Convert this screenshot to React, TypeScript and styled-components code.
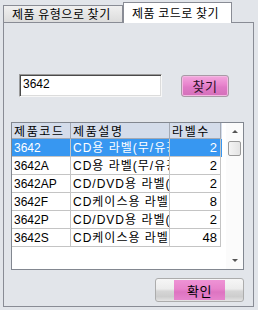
import React from 'react'
import styled, { createGlobalStyle } from 'styled-components'

const GlobalStyle = createGlobalStyle`
    html, body {
        margin: 0;
        background: #e2e5ea;
    }
    body {
        font-family: "Liberation Sans", "Noto Sans CJK KR", sans-serif;
        font-size: 12px;
        color: #000;
    }
`

const Window = styled.div`
    width: 258px;
    height: 310px;
    box-sizing: border-box;
    padding: 2px 4px 3px 3px;
    display: flex;
    flex-direction: column;
`

const TabBar = styled.div`
    display: flex;
    align-items: flex-end;
    height: 21px;
    margin-bottom: -1px;
    position: relative;
    z-index: 1;
`

const Tab = styled.div<{ $active?: boolean }>`
    box-sizing: border-box;
    height: ${(p) => (p.$active ? '21px' : '18px')};
    width: ${(p) => (p.$active ? '109px' : '120px')};
    padding: ${(p) => (p.$active ? '2px 0 0 8px' : '0 0 0 8px')};
    border: 1px solid #898c95;
    border-bottom: ${(p) => (p.$active ? 'none' : '1px solid #898c95')};
    background: ${(p) => (p.$active ? '#fff' : 'linear-gradient(#f0f0f0, #dcdcdc)')};
    font-family: "Noto Sans CJK KR", sans-serif;
    font-size: 12px;
    letter-spacing: 0.5px;
    line-height: 16px;
    white-space: nowrap;
    overflow: hidden;
`

const Panel = styled.div`
    flex: 1;
    border: 1px solid #898c95;
    background: #e2e5ea;
    padding: 51px 9px 0 7px;
    display: flex;
    flex-direction: column;
`

const SearchRow = styled.div`
    display: flex;
    align-items: center;
    gap: 19px;
    margin-left: 8px;
`

const CodeInput = styled.div`
    box-sizing: border-box;
    width: 143px;
    height: 23px;
    border: 1px solid;
    border-color: #9a9a9a #f7f7f7 #f7f7f7 #9a9a9a;
    box-shadow: inset 1px 1px 0 #4a4a4a, inset -1px -1px 0 #dcdcdc;
    background: #fff;
    padding: 2px 3px;
    line-height: 14px;
`

const FindButton = styled.div`
    box-sizing: border-box;
    width: 48px;
    height: 22px;
    border: 1px solid #a89aa6;
    border-radius: 3px;
    background: linear-gradient(#f2a7dd 0%, #e883cd 45%, #e07ac6 55%, #d46fba 100%);
    box-shadow: inset 0 0 0 1px #f3b8e2;
    display: flex;
    align-items: center;
    justify-content: center;
    font-family: "Noto Sans CJK KR", sans-serif;
    font-size: 13px;
    letter-spacing: 0.5px;
    color: #2a1026;
`

const ListBox = styled.div`
    margin-top: 25px;
    height: 148px;
    box-sizing: border-box;
    border: 1px solid #828790;
    background: #fff;
    display: flex;
`

const Grid = styled.div`
    flex: 1;
`

const Row = styled.div<{ $header?: boolean; $selected?: boolean }>`
    display: grid;
    grid-template-columns: 59px 99px 51px;
    height: ${(p) => (p.$header ? '16px' : '18px')};
    box-sizing: border-box;
    background: ${(p) => (p.$header ? '#d4dcea' : p.$selected ? '#3797f1' : '#fff')};
    color: ${(p) => (p.$selected ? '#fff' : '#000')};
`

const Cell = styled.div<{ $header?: boolean; $num?: boolean; $wide?: boolean }>`
    box-sizing: border-box;
    border-right: 1px solid ${(p) => (p.$header ? '#a3a9b4' : '#c4c4c4')};
    border-bottom: 1px solid ${(p) => (p.$header ? '#a3a9b4' : '#c4c4c4')};
    padding: ${(p) => (p.$num ? '0 3px 0 0' : '0 0 0 2px')};
    text-align: ${(p) => (p.$num ? 'right' : 'left')};
    font-family: ${(p) => (p.$header ? '"Noto Sans CJK KR", sans-serif' : 'inherit')};
    font-size: ${(p) => (p.$num ? '13px' : '12px')};
    letter-spacing: ${(p) => (p.$header ? '1.6px' : p.$wide ? '1px' : '0')};
    line-height: ${(p) => (p.$header ? '15px' : '18px')};
    white-space: nowrap;
    overflow: hidden;
`

const ScrollBar = styled.div`
    width: 17px;
    margin-left: 4px;
    display: flex;
    flex-direction: column;
    align-items: center;
    background: #fbfbfb;
`

const Arrow = styled.div<{ $down?: boolean }>`
    height: 17px;
    display: flex;
    align-items: center;
    justify-content: center;
    margin-top: ${(p) => (p.$down ? 'auto' : '0')};
    &::after {
        content: '';
        border-left: 3px solid transparent;
        border-right: 3px solid transparent;
        ${(p) => (p.$down ? 'border-top: 3px solid #555;' : 'border-bottom: 3px solid #555;')}
    }
`

const Thumb = styled.div`
    width: 13px;
    height: 15px;
    margin-top: 1px;
    box-sizing: border-box;
    border: 1px solid #9a9a9a;
    border-radius: 2px;
    background: linear-gradient(90deg, #f4f4f4, #e4e4e4);
`

const Footer = styled.div`
    display: flex;
    justify-content: flex-end;
    margin-top: 8px;
`

const OkButton = styled.div`
    box-sizing: border-box;
    width: 89px;
    height: 24px;
    border: 1px solid #acacac;
    border-radius: 3px;
    background: linear-gradient(#f6f6f6 0%, #ececec 45%, #d6d6d6 55%, #cdcdcd 80%, #e4e4e4 100%);
    display: flex;
    justify-content: center;
    padding: 1px 0;
`

const OkLabel = styled.span`
    width: 51px;
    display: flex;
    align-items: center;
    justify-content: center;
    background: linear-gradient(#ee93d5 0%, #e883cb 45%, #dd74c1 60%, #e684cc 100%);
    font-family: "Noto Sans CJK KR", sans-serif;
    font-size: 13px;
    letter-spacing: 0.5px;
`

type Item = { code: string; desc: string; count: number }

const items: Item[] = [
    { code: '3642', desc: 'CD용 라벨(무/유광)', count: 2 },
    { code: '3642A', desc: 'CD용 라벨(무/유광)', count: 2 },
    { code: '3642AP', desc: 'CD/DVD용 라벨(무광)', count: 2 },
    { code: '3642F', desc: 'CD케이스용 라벨', count: 8 },
    { code: '3642P', desc: 'CD/DVD용 라벨(무광)', count: 2 },
    { code: '3642S', desc: 'CD케이스용 라벨', count: 48 },
]

const App: React.FC = () => {
    return (
        <>
            <GlobalStyle />
            <Window>
                <TabBar>
                    <Tab>제품 유형으로 찾기</Tab>
                    <Tab $active>제품 코드로 찾기</Tab>
                </TabBar>
                <Panel>
                    <SearchRow>
                        <CodeInput>3642</CodeInput>
                        <FindButton>찾기</FindButton>
                    </SearchRow>
                    <ListBox>
                        <Grid>
                            <Row $header>
                                <Cell $header>제품코드</Cell>
                                <Cell $header>제품설명</Cell>
                                <Cell $header>라벨수</Cell>
                            </Row>
                            {items.map((it, i) => (
                                <Row key={it.code} $selected={i === 0}>
                                    <Cell>{it.code}</Cell>
                                    <Cell $wide>{it.desc}</Cell>
                                    <Cell $num>{it.count}</Cell>
                                </Row>
                            ))}
                        </Grid>
                        <ScrollBar>
                            <Arrow />
                            <Thumb />
                            <Arrow $down />
                        </ScrollBar>
                    </ListBox>
                    <Footer>
                        <OkButton>
                            <OkLabel>확인</OkLabel>
                        </OkButton>
                    </Footer>
                </Panel>
            </Window>
        </>
    )
}

export default App
